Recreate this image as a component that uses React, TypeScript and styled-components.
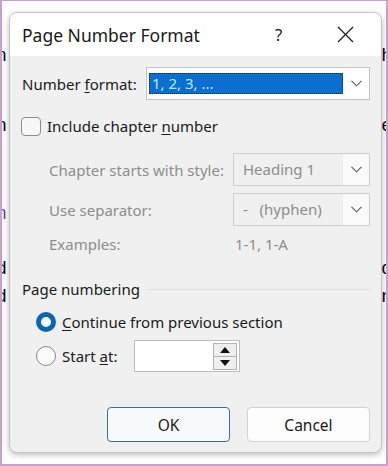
import styled, { createGlobalStyle } from 'styled-components';

const GlobalStyle = createGlobalStyle`
  body {
    margin: 0;
    font-family: "Noto Sans", "Open Sans", sans-serif;
  }
`;

interface IFragment {
  gap: number;
  left?: string;
  right?: string;
  leftColor?: string;
}

const docLines: IFragment[] = [
  { gap: 44, left: 'n', right: 'h' },
  { gap: 51, left: 'n', right: 'e' },
  { gap: 69, left: 'n', leftColor: '#7a3fa0' },
  { gap: 36, left: 'd', right: 'd' },
  { gap: 9, left: 'd', right: 'n' },
];

const App = () => {
  return (
    <>
      <GlobalStyle />
      <Screen>
        <Doc>
          {docLines.map((line, i) => (
            <DocLine key={i} $gap={line.gap}>
              <Fragment $side="left" $color={line.leftColor}>
                {line.left}
              </Fragment>
              <Fragment $side="right">{line.right}</Fragment>
            </DocLine>
          ))}
        </Doc>

        <Dialog>
          <TitleBar>
            <Title>Page Number Format</Title>
            <Help>?</Help>
            <Close>
              <svg width="17" height="17" viewBox="0 0 17 17">
                <path d="M1 1 L16 16 M16 1 L1 16" stroke="#1f1f1f" strokeWidth="1.3" />
              </svg>
            </Close>
          </TitleBar>

          <Body>
            <FormatRow>
              <Label>
                Number <u>f</u>ormat:
              </Label>
              <Combo $width={224}>
                <Selection>1, 2, 3, ...</Selection>
                <Arrow>
                  <Chevron />
                </Arrow>
              </Combo>
            </FormatRow>

            <CheckRow>
              <Checkbox />
              <Label>
                Include chapter <u>n</u>umber
              </Label>
            </CheckRow>

            <SubRow $top={17}>
              <SubLabel $disabled>Chapter starts with style:</SubLabel>
              <Combo $width={137} $disabled>
                <ComboText>Heading 1</ComboText>
                <Arrow $disabled>
                  <Chevron />
                </Arrow>
              </Combo>
            </SubRow>

            <SubRow $top={7}>
              <SubLabel $disabled>Use separator:</SubLabel>
              <Combo $width={137} $disabled>
                <ComboText>-&nbsp;&nbsp;&nbsp;(hyphen)</ComboText>
                <Arrow $disabled>
                  <Chevron />
                </Arrow>
              </Combo>
            </SubRow>

            <ExampleRow>
              <SubLabel $disabled>Examples:</SubLabel>
              <SubLabel $disabled>1-1, 1-A</SubLabel>
            </ExampleRow>

            <GroupHeader>
              <Label>Page numbering</Label>
              <Rule />
            </GroupHeader>

            <RadioRow $top={13}>
              <Radio $checked />
              <Label>
                <u>C</u>ontinue from previous section
              </Label>
            </RadioRow>

            <RadioRow $top={8}>
              <Radio />
              <Label $width={66}>
                Start <u>a</u>t:
              </Label>
              <Spinner>
                <SpinButtons>
                  <SpinButton>
                    <svg width="10" height="6" viewBox="0 0 10 6">
                      <path d="M0 6 L5 0 L10 6 Z" fill="#111" />
                    </svg>
                  </SpinButton>
                  <SpinButton>
                    <svg width="10" height="6" viewBox="0 0 10 6">
                      <path d="M0 0 L10 0 L5 6 Z" fill="#111" />
                    </svg>
                  </SpinButton>
                </SpinButtons>
              </Spinner>
            </RadioRow>

            <Buttons>
              <Button $primary>OK</Button>
              <Button>Cancel</Button>
            </Buttons>
          </Body>
        </Dialog>
      </Screen>
    </>
  );
};

const Chevron = () => (
  <svg width="11" height="7" viewBox="0 0 11 7">
    <path d="M0.5 0.8 L5.5 5.8 L10.5 0.8" fill="none" stroke="#5a5a5a" strokeWidth="1.1" />
  </svg>
);

const Screen = styled.div`
  position: relative;
  width: 388px;
  height: 466px;
  box-sizing: border-box;
  overflow: hidden;
  background: #ffffff;
  border: 2px solid #c99fd3;
  border-top-width: 1px;
`;

const Doc = styled.div`
  display: flex;
  flex-direction: column;
  font-family: "Liberation Sans", Arial, sans-serif;
  font-size: 19px;
  color: #111;
`;

const DocLine = styled.div<{ $gap: number }>`
  display: flex;
  justify-content: space-between;
  height: 19px;
  line-height: 19px;
  margin-top: ${({ $gap }) => $gap}px;
`;

const Fragment = styled.span<{ $side: 'left' | 'right'; $color?: string }>`
  color: ${({ $color }) => $color || '#111'};
  margin-left: ${({ $side }) => ($side === 'left' ? '-6px' : '0')};
  margin-right: ${({ $side }) => ($side === 'right' ? '-6px' : '0')};
`;

const Dialog = styled.div`
  position: absolute;
  left: 7px;
  top: 11px;
  width: 373px;
  height: 441px;
  box-sizing: border-box;
  display: flex;
  flex-direction: column;
  border: 1px solid #c6c6c6;
  border-radius: 8px;
  overflow: hidden;
  background: #f0f0f0;
  box-shadow: 0 2px 6px rgba(0, 0, 0, 0.25);
`;

const TitleBar = styled.div`
  display: flex;
  align-items: center;
  height: 43px;
  flex-shrink: 0;
  padding-left: 12px;
  background: #ffffff;
`;

const Title = styled.div`
  flex: 1;
  font-size: 17.5px;
  color: #1a1a1a;
  padding-top: 1px;
`;

const Help = styled.div`
  width: 20px;
  margin-right: 42px;
  font-size: 17px;
  color: #1a1a1a;
`;

const Close = styled.div`
  display: flex;
  width: 17px;
  margin-right: 27px;
`;

const Body = styled.div`
  display: flex;
  flex-direction: column;
  padding: 11px 11px 0 12px;
  color: #1a1a1a;
  font-size: 15px;
`;

const Label = styled.span<{ $width?: number }>`
  white-space: nowrap;
  width: ${({ $width }) => ($width ? `${$width}px` : 'auto')};

  u {
    text-underline-offset: 2px;
  }
`;

const FormatRow = styled.div`
  display: flex;
  align-items: center;
  justify-content: space-between;
  height: 33px;
`;

const Combo = styled.div<{ $width: number; $disabled?: boolean }>`
  display: flex;
  align-items: stretch;
  width: ${({ $width }) => $width}px;
  height: 33px;
  box-sizing: border-box;
  border: 1px solid ${({ $disabled }) => ($disabled ? '#cdcdcd' : '#c4c4c4')};
  background: ${({ $disabled }) => ($disabled ? '#f0f0f0' : '#ffffff')};
`;

const Selection = styled.div`
  flex: 1;
  margin: 5px 0 5px 2px;
  padding-left: 3px;
  background: #0a6fd1;
  outline: 1px dotted #1a2a3a;
  outline-offset: -1px;
  color: #b7ecff;
  font-size: 15px;
  line-height: 21px;
`;

const ComboText = styled.div`
  flex: 1;
  padding-left: 9px;
  line-height: 31px;
  color: #8d8d8d;
  white-space: nowrap;
`;

const Arrow = styled.div<{ $disabled?: boolean }>`
  display: flex;
  align-items: center;
  justify-content: center;
  width: 26px;
  background: ${({ $disabled }) => ($disabled ? '#fafafa' : '#ffffff')};
`;

const CheckRow = styled.div`
  display: flex;
  align-items: center;
  gap: 6px;
  height: 20px;
  margin-top: 16px;
  margin-left: -1px;
`;

const Checkbox = styled.div`
  width: 20px;
  height: 19px;
  box-sizing: border-box;
  border: 1px solid #8c8c8c;
  border-radius: 4px;
  background: #f7f7f7;
`;

const SubRow = styled.div<{ $top: number }>`
  display: flex;
  align-items: center;
  justify-content: space-between;
  margin-top: ${({ $top }) => $top}px;
  padding-left: 27px;
`;

const SubLabel = styled.span<{ $disabled?: boolean }>`
  white-space: nowrap;
  color: ${({ $disabled }) => ($disabled ? '#8d8d8d' : '#1a1a1a')};
`;

const ExampleRow = styled.div`
  display: grid;
  grid-template-columns: 186px auto;
  height: 20px;
  line-height: 20px;
  margin-top: 8px;
  padding-left: 27px;
`;

const GroupHeader = styled.div`
  display: flex;
  align-items: center;
  gap: 8px;
  height: 20px;
  margin-top: 25px;
`;

const Rule = styled.div`
  flex: 1;
  height: 1px;
  background: #dedede;
`;

const RadioRow = styled.div<{ $top: number }>`
  display: flex;
  align-items: center;
  gap: 6px;
  min-height: 20px;
  margin-top: ${({ $top }) => $top}px;
  padding-left: 14px;
`;

const Radio = styled.div<{ $checked?: boolean }>`
  width: 20px;
  height: 20px;
  box-sizing: border-box;
  border-radius: 50%;
  flex-shrink: 0;
  border: ${({ $checked }) => ($checked ? '5px solid #0866b8' : '1px solid #858585')};
  background: ${({ $checked }) => ($checked ? '#ffffff' : '#fbfbfb')};
`;

const Spinner = styled.div`
  display: flex;
  justify-content: flex-end;
  align-items: center;
  width: 106px;
  height: 32px;
  box-sizing: border-box;
  padding-right: 2px;
  border: 1px solid #bdbdbd;
  background: #ffffff;
`;

const SpinButtons = styled.div`
  display: flex;
  flex-direction: column;
  width: 24px;
  height: 27px;
  box-sizing: border-box;
  border: 1px solid #b3b3b3;
`;

const SpinButton = styled.div`
  flex: 1;
  display: flex;
  align-items: center;
  justify-content: center;
  background: #efefef;

  & + & {
    border-top: 1px solid #b3b3b3;
  }
`;

const Buttons = styled.div`
  display: flex;
  justify-content: flex-end;
  gap: 17px;
  margin-top: 35px;
`;

const Button = styled.div<{ $primary?: boolean }>`
  display: flex;
  align-items: center;
  justify-content: center;
  width: 123px;
  height: 35px;
  box-sizing: border-box;
  border-radius: 4px;
  font-size: 15.5px;
  color: #1a1a1a;
  border: 1px solid ${({ $primary }) => ($primary ? '#3c6f93' : '#d2d2d2')};
  background: ${({ $primary }) => ($primary ? '#f6fafd' : '#fdfdfd')};
`;

export default App;
